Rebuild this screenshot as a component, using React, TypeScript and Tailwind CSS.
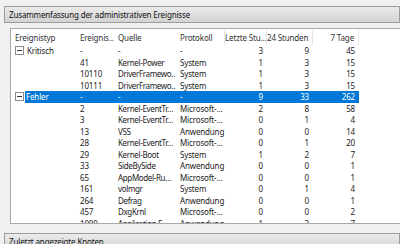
import React from 'react';

type Row = {
  id: string;
  source: string;
  log: string;
  hour: string;
  day: string;
  week: string;
  group?: string;
  selected?: boolean;
};

const rows: Row[] = [
  { group: 'Kritisch', id: '-', source: '-', log: '-', hour: '3', day: '9', week: '45' },
  { id: '41', source: 'Kernel-Power', log: 'System', hour: '1', day: '3', week: '15' },
  { id: '10110', source: 'DriverFramewo…', log: 'System', hour: '1', day: '3', week: '15' },
  { id: '10111', source: 'DriverFramewo…', log: 'System', hour: '1', day: '3', week: '15' },
  { group: 'Fehler', id: '-', source: '-', log: '-', hour: '9', day: '33', week: '262', selected: true },
  { id: '2', source: 'Kernel-EventTr…', log: 'Microsoft-…', hour: '2', day: '8', week: '58' },
  { id: '3', source: 'Kernel-EventTr…', log: 'Microsoft-…', hour: '0', day: '1', week: '4' },
  { id: '13', source: 'VSS', log: 'Anwendung', hour: '0', day: '0', week: '14' },
  { id: '28', source: 'Kernel-EventTr…', log: 'Microsoft-…', hour: '0', day: '1', week: '20' },
  { id: '29', source: 'Kernel-Boot', log: 'System', hour: '1', day: '2', week: '7' },
  { id: '33', source: 'SideBySide', log: 'Anwendung', hour: '0', day: '0', week: '1' },
  { id: '65', source: 'AppModel-Ru…', log: 'Microsoft-…', hour: '0', day: '0', week: '1' },
  { id: '161', source: 'volmgr', log: 'System', hour: '0', day: '1', week: '4' },
  { id: '264', source: 'Defrag', log: 'Anwendung', hour: '0', day: '0', week: '1' },
  { id: '457', source: 'DxgKrnl', log: 'Microsoft-…', hour: '0', day: '0', week: '2' },
  { id: '1000', source: 'Application E…', log: 'Anwendung', hour: '1', day: '3', week: '7' },
];

// column widths, px
const cols = 'grid grid-cols-[65px_38px_62px_49px_42px_46px_46px]';

const MinusBox = () => (
  <span className="flex h-[9px] w-[9px] shrink-0 items-center justify-center border border-[#8a8a8a] bg-white">
    <span className="h-px w-[5px] bg-[#333]" />
  </span>
);

const SectionBar = ({ title }: { title: string }) => (
  <div className="ml-[4px] h-[17px] overflow-hidden whitespace-nowrap border border-[#9c9c9c] bg-gradient-to-b from-[#ebebeb] to-[#d3d3d3] pl-[4px] leading-[15px] text-[#111]">
    {title}
  </div>
);

export default function App() {
  return (
    <div
      className="h-[244px] w-[400px] overflow-hidden bg-[#f0f0f0] text-[8px] tracking-[-0.15px]"
      style={{ fontFamily: '"Noto Sans", "Open Sans", sans-serif' }}
    >
      <div className="h-[6px]" />
      <SectionBar title="Zusammenfassung der administrativen Ereignisse" />

      <div className="ml-[10px] mt-[5px] h-[196px] overflow-hidden whitespace-nowrap border border-r-0 border-[#a8a8a8] bg-white">
        {/* header row */}
        <div className={`${cols} h-[16px] items-center leading-[15px] text-[#333]`}>
          <div className="overflow-hidden pl-[4px]">Ereignistyp</div>
          <div className="overflow-hidden pl-[4px]">Ereignis…</div>
          <div className="overflow-hidden pl-[4px]">Quelle</div>
          <div className="overflow-hidden border-r border-[#e5e5e5] pl-[4px]">Protokoll</div>
          <div className="overflow-hidden border-r border-[#e5e5e5] pr-[4px] text-right">Letzte Stu…</div>
          <div className="overflow-hidden border-r border-[#e5e5e5] pr-[4px] text-right">24 Stunden</div>
          <div className="overflow-hidden border-r border-[#e5e5e5] pr-[4px] text-right">7 Tage</div>
        </div>

        {rows.map((r, i) => (
          <div key={i} className={`${cols} h-[11.5px] items-center leading-[11.5px] text-[#222]`}>
            <div className="flex items-center pl-[4px]">
              {r.group && (
                <>
                  <MinusBox />
                  <span
                    className={
                      r.selected
                        ? 'ml-px flex-1 bg-[#0078d7] pl-[1px] text-white'
                        : 'ml-[3px]'
                    }
                  >
                    {r.group}
                  </span>
                </>
              )}
            </div>
            <div className={`overflow-hidden pl-[4px] ${r.selected ? 'bg-[#0078d7] text-white' : ''}`}>
              {r.id}
            </div>
            <div
              className={`overflow-hidden pl-[4px] tracking-[-0.35px] ${r.selected ? 'bg-[#0078d7] text-white' : ''}`}
            >
              {r.source}
            </div>
            <div className={`overflow-hidden pl-[4px] ${r.selected ? 'bg-[#0078d7] text-white' : ''}`}>
              {r.log}
            </div>
            {[r.hour, r.day, r.week].map((v, j) => (
              <div
                key={j}
                className={`overflow-hidden pr-[4px] text-right ${r.selected ? 'bg-[#0078d7] text-white' : ''}`}
              >
                {v}
              </div>
            ))}
          </div>
        ))}
      </div>

      <div className="h-[9px]" />
      <SectionBar title="Zuletzt angezeigte Knoten" />
    </div>
  );
}
